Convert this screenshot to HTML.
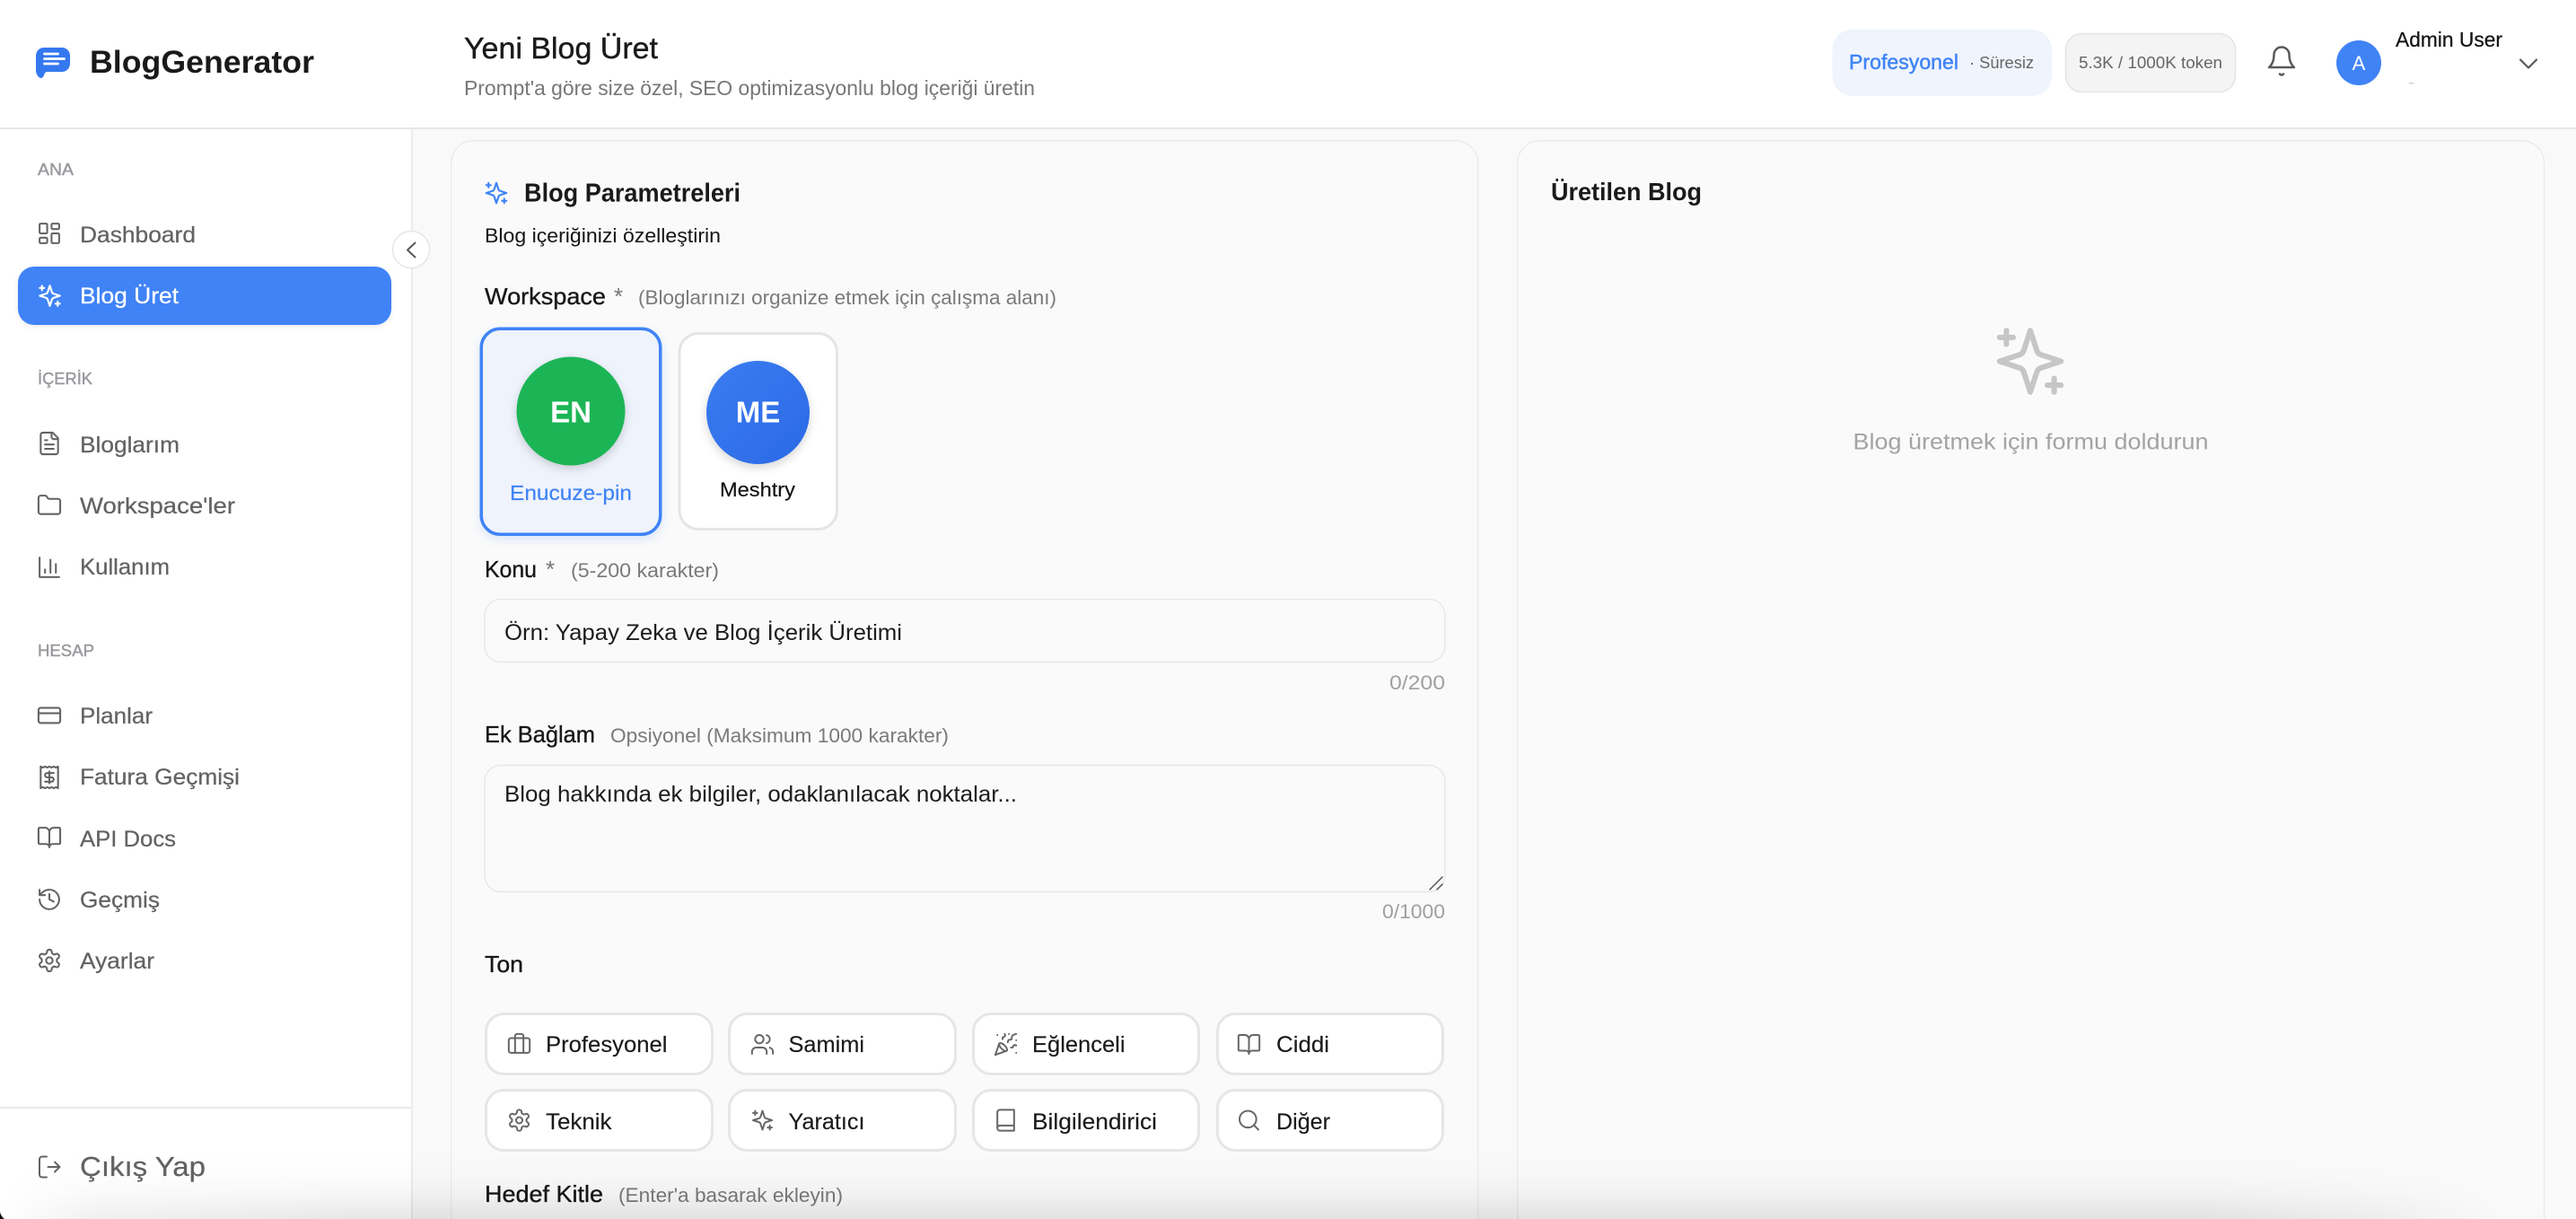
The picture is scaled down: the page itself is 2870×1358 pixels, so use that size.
<!DOCTYPE html>
<html lang="tr">
<head>
<meta charset="utf-8">
<title>BlogGenerator</title>
<style>
html,body{margin:0;padding:0;width:2870px;height:1358px;overflow:hidden;background:#f9f9f9}
svg{display:block}
text{font-family:"Liberation Sans",Arial,sans-serif;white-space:pre}
.nav{font-size:25px;fill:#636363;stroke:#636363;stroke-width:.25}
.sec{font-size:18px;fill:#98989d;stroke:#98989d;stroke-width:.4}
.lab{font-size:26px;fill:#171717;stroke:#171717;stroke-width:.35}
.hint{font-size:22px;fill:#7a7a7a}
.ph{font-size:25px;fill:#1c1c1c}
.cnt{font-size:22px;fill:#a0a0a0}
.btn{font-size:25px;fill:#1a1a1a;stroke:#1a1a1a;stroke-width:.15}
.ic{fill:none;stroke:#636363;stroke-width:1.7;stroke-linecap:round;stroke-linejoin:round}
.ict{fill:none;stroke:#666;stroke-width:1.7;stroke-linecap:round;stroke-linejoin:round}
</style>
</head>
<body>
<svg xmlns="http://www.w3.org/2000/svg" width="2870" height="1358" viewBox="0 0 2870 1358">
<defs>
<filter id="sh1" x="-30%" y="-30%" width="160%" height="160%"><feDropShadow dx="0" dy="4" stdDeviation="5" flood-color="#000" flood-opacity=".16"/></filter>
<filter id="sh2" x="-10%" y="-10%" width="120%" height="125%"><feDropShadow dx="0" dy="4" stdDeviation="5" flood-color="#3b82f6" flood-opacity=".18"/></filter>
<filter id="sh3" x="-10%" y="-20%" width="120%" height="140%"><feDropShadow dx="0" dy="2" stdDeviation="3" flood-color="#000" flood-opacity=".08"/></filter>
<linearGradient id="me" x1="0" y1="0" x2="1" y2="1"><stop offset="0" stop-color="#3b7cf0"/><stop offset="1" stop-color="#2b69e6"/></linearGradient>
<linearGradient id="fadeV" gradientUnits="userSpaceOnUse" x1="0" y1="1285" x2="0" y2="1358"><stop offset="0" stop-color="#000" stop-opacity="0"/><stop offset=".35" stop-color="#000" stop-opacity=".012"/><stop offset=".62" stop-color="#000" stop-opacity=".035"/><stop offset="1" stop-color="#000" stop-opacity=".095"/></linearGradient>
<linearGradient id="fadeH" gradientUnits="userSpaceOnUse" x1="0" y1="0" x2="2870" y2="0"><stop offset="0" stop-color="#000"/><stop offset=".035" stop-color="#999"/><stop offset=".14" stop-color="#fff"/><stop offset=".855" stop-color="#fff"/><stop offset=".925" stop-color="#808080"/><stop offset=".97" stop-color="#0d0d0d"/><stop offset="1" stop-color="#000"/></linearGradient>
<mask id="fadeM" maskUnits="userSpaceOnUse" x="0" y="1285" width="2870" height="73"><rect y="1285" width="2870" height="73" fill="url(#fadeH)"/></mask>

<symbol id="dash" viewBox="0 0 24 24"><rect x="3" y="3" width="7" height="9" rx="1"/><rect x="14" y="3" width="7" height="5" rx="1"/><rect x="14" y="12" width="7" height="9" rx="1"/><rect x="3" y="16" width="7" height="5" rx="1"/></symbol>
<symbol id="spark" viewBox="0 0 24 24"><path d="m12 3-1.912 5.813a2 2 0 0 1-1.275 1.275L3 12l5.813 1.912a2 2 0 0 1 1.275 1.275L12 21l1.912-5.813a2 2 0 0 1 1.275-1.275L21 12l-5.813-1.912a2 2 0 0 1-1.275-1.275L12 3Z"/><path d="M5 3v4"/><path d="M19 17v4"/><path d="M3 5h4"/><path d="M17 19h4"/></symbol>
<symbol id="file" viewBox="0 0 24 24"><path d="M15 2H6a2 2 0 0 0-2 2v16a2 2 0 0 0 2 2h12a2 2 0 0 0 2-2V7Z"/><path d="M14 2v4a2 2 0 0 0 2 2h4"/><path d="M10 9H8"/><path d="M16 13H8"/><path d="M16 17H8"/></symbol>
<symbol id="folder" viewBox="0 0 24 24"><path d="M20 20a2 2 0 0 0 2-2V8a2 2 0 0 0-2-2h-7.900a2 2 0 0 1-1.690-.9L9.600 3.900A2 2 0 0 0 7.930 3H4a2 2 0 0 0-2 2v13a2 2 0 0 0 2 2Z"/></symbol>
<symbol id="chart" viewBox="0 0 24 24"><path d="M3 3v18h18"/><path d="M18 17V9"/><path d="M13 17V5"/><path d="M8 17v-3"/></symbol>
<symbol id="card" viewBox="0 0 24 24"><rect x="2" y="5" width="20" height="14" rx="2"/><path d="M2 10h20"/></symbol>
<symbol id="receipt" viewBox="0 0 24 24"><path d="M4 2v20l2-1 2 1 2-1 2 1 2-1 2 1 2-1 2 1V2l-2 1-2-1-2 1-2-1-2 1-2-1-2 1Z"/><path d="M16 8h-6a2 2 0 1 0 0 4h4a2 2 0 1 1 0 4H8"/><path d="M12 17.500v-11"/></symbol>
<symbol id="bookopen" viewBox="0 0 24 24"><path d="M12 7v14"/><path d="M3 18a1 1 0 0 1-1-1V4a1 1 0 0 1 1-1h5a4 4 0 0 1 4 4 4 4 0 0 1 4-4h5a1 1 0 0 1 1 1v13a1 1 0 0 1-1 1h-6a3 3 0 0 0-3 3 3 3 0 0 0-3-3z"/></symbol>
<symbol id="history" viewBox="0 0 24 24"><path d="M3 12a9 9 0 1 0 9-9 9.750 9.750 0 0 0-6.740 2.740L3 8"/><path d="M3 3v5h5"/><path d="M12 7v5l4 2"/></symbol>
<symbol id="gear" viewBox="0 0 24 24"><path d="M12.220 2h-.44a2 2 0 0 0-2 2v.18a2 2 0 0 1-1 1.730l-.43.25a2 2 0 0 1-2 0l-.15-.08a2 2 0 0 0-2.730.73l-.22.38a2 2 0 0 0 .73 2.730l.15.1a2 2 0 0 1 1 1.720v.51a2 2 0 0 1-1 1.740l-.15.09a2 2 0 0 0-.73 2.730l.22.38a2 2 0 0 0 2.730.73l.15-.08a2 2 0 0 1 2 0l.43.25a2 2 0 0 1 1 1.730V20a2 2 0 0 0 2 2h.44a2 2 0 0 0 2-2v-.18a2 2 0 0 1 1-1.730l.43-.25a2 2 0 0 1 2 0l.15.08a2 2 0 0 0 2.730-.73l.22-.39a2 2 0 0 0-.73-2.730l-.15-.08a2 2 0 0 1-1-1.740v-.5a2 2 0 0 1 1-1.740l.15-.09a2 2 0 0 0 .73-2.730l-.22-.38a2 2 0 0 0-2.730-.73l-.15.08a2 2 0 0 1-2 0l-.43-.25a2 2 0 0 1-1-1.730V4a2 2 0 0 0-2-2z"/><circle cx="12" cy="12" r="3"/></symbol>
<symbol id="briefcase" viewBox="0 0 24 24"><path d="M16 20V4a2 2 0 0 0-2-2h-4a2 2 0 0 0-2 2v16"/><rect x="2" y="6" width="20" height="14" rx="2"/></symbol>
<symbol id="users" viewBox="0 0 24 24"><path d="M16 21v-2a4 4 0 0 0-4-4H6a4 4 0 0 0-4 4v2"/><circle cx="9" cy="7" r="4"/><path d="M22 21v-2a4 4 0 0 0-3-3.870"/><path d="M16 3.130a4 4 0 0 1 0 7.750"/></symbol>
<symbol id="party" viewBox="0 0 24 24"><path d="M5.800 11.300 2 22l10.700-3.790"/><path d="M4 3h.01"/><path d="M22 8h.01"/><path d="M15 2h.01"/><path d="M22 20h.01"/><path d="m22 2-2.240.75a2.900 2.900 0 0 0-1.960 3.120c.1.860-.57 1.630-1.450 1.630h-.38c-.86 0-1.600.6-1.760 1.440L14 10"/><path d="m22 13-.82-.33c-.86-.34-1.820.2-1.980 1.110-.11.7-.72 1.220-1.430 1.220H17"/><path d="m11 2 .33.82c.34.860-.2 1.820-1.110 1.980C9.520 4.900 9 5.520 9 6.230V7"/><path d="M11 13c1.930 1.930 2.830 4.170 2 5-.83.83-3.070-.07-5-2-1.930-1.930-2.830-4.170-2-5 .83-.83 3.070.07 5 2Z"/></symbol>
<symbol id="book" viewBox="0 0 24 24"><path d="M4 19.500v-15A2.500 2.500 0 0 1 6.500 2H20v20H6.500a2.500 2.500 0 0 1 0-5H20"/></symbol>
<symbol id="search" viewBox="0 0 24 24"><circle cx="11" cy="11" r="8"/><path d="m21 21-4.300-4.300"/></symbol>
</defs>

<!-- page -->
<rect width="2870" height="1358" fill="#f9f9f9"/>

<!-- header -->
<rect width="2870" height="142" fill="#fff"/>
<rect y="142" width="2870" height="2" fill="#e7e7e9"/>

<!-- logo -->
<path d="M49 53h20a9 9 0 0 1 9 9v9a9 9 0 0 1-9 9H52.500c-1.500 0-2.500 1-3 2.500-.8 2.500-2 4.500-4 4.500-3.500-1-5.500-5-5.500-9V62a9 9 0 0 1 9-9z" fill="#3478f0"/>
<path d="M49.500 60h15M49.500 65.500h22M49.500 71h15" stroke="#fff" stroke-width="2.800" stroke-linecap="round" fill="none"/>
<text x="100" y="81" font-size="35" font-weight="700" fill="#1a1a1a" textLength="250" lengthAdjust="spacingAndGlyphs">BlogGenerator</text>

<!-- title -->
<text x="517" y="65" font-size="33" fill="#1a1a1a" stroke="#1a1a1a" stroke-width=".4" textLength="216" lengthAdjust="spacingAndGlyphs">Yeni Blog Üret</text>
<text x="517" y="106" font-size="23" fill="#777" textLength="636" lengthAdjust="spacingAndGlyphs">Prompt'a göre size özel, SEO optimizasyonlu blog içeriği üretin</text>

<!-- header right -->
<rect x="2041.500" y="33" width="244.500" height="74" rx="22" fill="#eff4fd"/>
<text x="2060" y="77" font-size="23" fill="#3f83f6" stroke="#3f83f6" stroke-width=".45" textLength="122" lengthAdjust="spacingAndGlyphs">Profesyonel</text>
<text x="2194" y="76" font-size="18" fill="#666" textLength="72" lengthAdjust="spacingAndGlyphs">· Süresiz</text>
<rect x="2301.500" y="37.500" width="189" height="65" rx="18" fill="#f4f4f4" stroke="#e4e4e4" stroke-width="1.500"/>
<text x="2316" y="76" font-size="18.500" fill="#666" textLength="160" lengthAdjust="spacingAndGlyphs">5.3K / 1000K token</text>
<g fill="none" stroke="#595959" stroke-width="2.500" stroke-linecap="round" stroke-linejoin="round">
<path d="M2533.500 61a8.500 8.500 0 0 1 17 0c0 10 5.500 14 5.500 14h-28s5.500-4 5.500-14"/>
<path d="M2540 82.500a2.500 2.500 0 0 0 4 0"/>
</g>
<circle cx="2628" cy="70" r="25" fill="#3f83f6"/>
<text x="2628" y="78" font-size="22" fill="#fff" text-anchor="middle">A</text>
<text x="2669" y="52" font-size="23" fill="#141414" stroke="#141414" stroke-width=".25" textLength="119" lengthAdjust="spacingAndGlyphs">Admin User</text>
<rect x="2684" y="92" width="5" height="1.500" fill="#ccc"/>
<path d="M2808 66.500l9 9 9-9" fill="none" stroke="#595959" stroke-width="2.200" stroke-linecap="round" stroke-linejoin="round"/>

<!-- sidebar -->
<rect y="144" width="458" height="1214" fill="#fff"/>
<rect x="458" y="144" width="2" height="1214" fill="#ebebed"/>
<text class="sec" x="42" y="195" textLength="40" lengthAdjust="spacingAndGlyphs">ANA</text>
<use href="#dash" class="ic" x="40.500" y="245.500" width="29" height="29"/>
<text class="nav" x="89" y="270" textLength="129" lengthAdjust="spacingAndGlyphs">Dashboard</text>
<rect x="20" y="297" width="416" height="65" rx="18" fill="#3f83f6" filter="url(#sh3)"/>
<use href="#spark" fill="none" stroke="#fff" stroke-width="1.700" stroke-linecap="round" stroke-linejoin="round" x="40.500" y="314.500" width="30" height="30"/>
<text x="89" y="338" font-size="25" fill="#fff" stroke="#fff" stroke-width=".25" textLength="110" lengthAdjust="spacingAndGlyphs">Blog Üret</text>
<circle cx="458" cy="278" r="20.500" fill="#fff" stroke="#e6e6e6" stroke-width="1.500"/>
<path d="M462.500 270.500l-8.500 8 8.500 8" fill="none" stroke="#595959" stroke-width="2" stroke-linecap="round" stroke-linejoin="round"/>

<text class="sec" x="42" y="428" textLength="61" lengthAdjust="spacingAndGlyphs">İÇERİK</text>
<use href="#file" class="ic" x="40.500" y="479.500" width="29" height="29"/>
<text class="nav" x="89" y="504" textLength="111" lengthAdjust="spacingAndGlyphs">Bloglarım</text>
<use href="#folder" class="ic" x="40.500" y="548.500" width="29" height="29"/>
<text class="nav" x="89" y="572" textLength="173" lengthAdjust="spacingAndGlyphs">Workspace'ler</text>
<use href="#chart" class="ic" x="40.500" y="617.500" width="29" height="29"/>
<text class="nav" x="89" y="640" textLength="100" lengthAdjust="spacingAndGlyphs">Kullanım</text>

<text class="sec" x="42" y="731" textLength="63" lengthAdjust="spacingAndGlyphs">HESAP</text>
<use href="#card" class="ic" x="40.500" y="782.500" width="29" height="29"/>
<text class="nav" x="89" y="806" textLength="81" lengthAdjust="spacingAndGlyphs">Planlar</text>
<use href="#receipt" class="ic" x="40.500" y="851.500" width="29" height="29"/>
<text class="nav" x="89" y="874" textLength="178" lengthAdjust="spacingAndGlyphs">Fatura Geçmişi</text>
<use href="#bookopen" class="ic" x="40.500" y="918.500" width="29" height="29"/>
<text class="nav" x="89" y="943" textLength="107" lengthAdjust="spacingAndGlyphs">API Docs</text>
<use href="#history" class="ic" x="40.500" y="987.500" width="29" height="29"/>
<text class="nav" x="89" y="1011" textLength="89" lengthAdjust="spacingAndGlyphs">Geçmiş</text>
<use href="#gear" class="ic" x="40.500" y="1055.500" width="29" height="29"/>
<text class="nav" x="89" y="1079" textLength="83" lengthAdjust="spacingAndGlyphs">Ayarlar</text>

<rect y="1233" width="458" height="2" fill="#e9e9ec"/>
<g fill="none" stroke="#636363" stroke-width="2" stroke-linecap="round" stroke-linejoin="round">
<path d="M52 1288.500h-5a3 3 0 0 0-3 3v17a3 3 0 0 0 3 3h5"/>
<path d="M53.500 1300h13M61 1294.500l5.500 5.500-5.500 5.500"/>
</g>
<text x="89" y="1310" font-size="31" fill="#636363" stroke="#636363" stroke-width=".25" textLength="140" lengthAdjust="spacingAndGlyphs">Çıkış Yap</text>

<!-- left card -->
<path d="M502.750 1358V181.750a25 25 0 0 1 25-25H1621.500a25 25 0 0 1 25 25V1358" fill="#fafafa" stroke="#ececec" stroke-width="1.500"/>
<use href="#spark" fill="none" stroke="#3f83f6" stroke-width="1.700" stroke-linecap="round" stroke-linejoin="round" x="538" y="200" width="30" height="30"/>
<text x="584" y="224.500" font-size="29" font-weight="700" fill="#1a1a1a" textLength="241" lengthAdjust="spacingAndGlyphs">Blog Parametreleri</text>
<text x="540" y="270" font-size="22.500" fill="#141414" textLength="263" lengthAdjust="spacingAndGlyphs">Blog içeriğinizi özelleştirin</text>

<text class="lab" x="540" y="339" textLength="135" lengthAdjust="spacingAndGlyphs">Workspace</text>
<text x="684" y="339" font-size="26" fill="#777">*</text>
<text class="hint" x="711" y="339" textLength="466" lengthAdjust="spacingAndGlyphs">(Bloglarınızı organize etmek için çalışma alanı)</text>

<!-- workspace cards -->
<rect x="536.250" y="366.250" width="199.500" height="229" rx="21" fill="#eff3fc" stroke="#3f83f6" stroke-width="3.500" filter="url(#sh2)"/>
<circle cx="636" cy="458" r="60.500" fill="#1fb557" filter="url(#sh1)"/>
<text x="636" y="470.500" font-size="33" font-weight="700" fill="#fff" text-anchor="middle">EN</text>
<text x="568" y="557" font-size="23" fill="#3f83f6" stroke="#3f83f6" stroke-width=".2" textLength="136" lengthAdjust="spacingAndGlyphs">Enucuze-pin</text>

<rect x="757" y="371.500" width="175.500" height="218" rx="21" fill="#fff" stroke="#e5e5e5" stroke-width="3"/>
<circle cx="844.500" cy="459.500" r="57.500" fill="url(#me)" filter="url(#sh1)"/>
<text x="844.500" y="470.500" font-size="33" font-weight="700" fill="#fff" text-anchor="middle">ME</text>
<text x="802" y="553" font-size="22" fill="#141414" stroke="#141414" stroke-width=".2" textLength="84" lengthAdjust="spacingAndGlyphs">Meshtry</text>

<!-- konu -->
<text class="lab" x="540" y="643" textLength="58" lengthAdjust="spacingAndGlyphs">Konu</text>
<text x="608" y="643" font-size="26" fill="#777">*</text>
<text class="hint" x="636" y="643" textLength="165" lengthAdjust="spacingAndGlyphs">(5-200 karakter)</text>
<rect x="540" y="667.500" width="1070" height="70" rx="18" fill="#fafafa" stroke="#e8e8e8" stroke-width="1.500"/>
<text class="ph" x="562" y="713" textLength="443" lengthAdjust="spacingAndGlyphs">Örn: Yapay Zeka ve Blog İçerik Üretimi</text>
<text class="cnt" x="1548" y="768" textLength="62" lengthAdjust="spacingAndGlyphs">0/200</text>

<!-- ek baglam -->
<text class="lab" x="540" y="827" textLength="123" lengthAdjust="spacingAndGlyphs">Ek Bağlam</text>
<text class="hint" x="680" y="827" textLength="377" lengthAdjust="spacingAndGlyphs">Opsiyonel (Maksimum 1000 karakter)</text>
<rect x="540" y="852.500" width="1070" height="141" rx="18" fill="#fafafa" stroke="#e8e8e8" stroke-width="1.500"/>
<text class="ph" x="562" y="893" textLength="571" lengthAdjust="spacingAndGlyphs">Blog hakkında ek bilgiler, odaklanılacak noktalar...</text>
<path d="M1593 991l14-14M1601 991l6-6" stroke="#555" stroke-width="1.500" fill="none" stroke-linecap="round"/>
<text class="cnt" x="1540" y="1023" textLength="70" lengthAdjust="spacingAndGlyphs">0/1000</text>

<!-- ton -->
<text class="lab" x="540" y="1083" textLength="43" lengthAdjust="spacingAndGlyphs">Ton</text>

<g fill="#fff" stroke="#e6e6e6" stroke-width="3">
<rect x="541.500" y="1129.500" width="252" height="67" rx="20"/>
<rect x="812.500" y="1129.500" width="252" height="67" rx="20"/>
<rect x="1084.500" y="1129.500" width="251" height="67" rx="20"/>
<rect x="1356.500" y="1129.500" width="251" height="67" rx="20"/>
<rect x="541.500" y="1214.500" width="252" height="67" rx="20"/>
<rect x="812.500" y="1214.500" width="252" height="67" rx="20"/>
<rect x="1084.500" y="1214.500" width="251" height="67" rx="20"/>
<rect x="1356.500" y="1214.500" width="251" height="67" rx="20"/>
</g>
<use href="#briefcase" class="ict" x="564.500" y="1149.500" width="28" height="28"/>
<text class="btn" x="608" y="1172" textLength="135.500" lengthAdjust="spacingAndGlyphs">Profesyonel</text>
<use href="#users" class="ict" x="835.500" y="1149.500" width="28" height="28"/>
<text class="btn" x="878.500" y="1172" textLength="84.500" lengthAdjust="spacingAndGlyphs">Samimi</text>
<use href="#party" class="ict" x="1106.500" y="1149.500" width="28" height="28"/>
<text class="btn" x="1150" y="1172" textLength="103.500" lengthAdjust="spacingAndGlyphs">Eğlenceli</text>
<use href="#bookopen" class="ict" x="1377.500" y="1149.500" width="28" height="28"/>
<text class="btn" x="1422" y="1172" textLength="59" lengthAdjust="spacingAndGlyphs">Ciddi</text>

<use href="#gear" class="ict" x="564.500" y="1234" width="28" height="28"/>
<text class="btn" x="608" y="1258" textLength="73.500" lengthAdjust="spacingAndGlyphs">Teknik</text>
<use href="#spark" class="ict" x="835.500" y="1234" width="28" height="28"/>
<text class="btn" x="878.500" y="1258" textLength="85" lengthAdjust="spacingAndGlyphs">Yaratıcı</text>
<use href="#book" class="ict" x="1106.500" y="1234" width="28" height="28"/>
<text class="btn" x="1150" y="1258" textLength="139" lengthAdjust="spacingAndGlyphs">Bilgilendirici</text>
<use href="#search" class="ict" x="1377.500" y="1234" width="28" height="28"/>
<text class="btn" x="1422" y="1258" textLength="60" lengthAdjust="spacingAndGlyphs">Diğer</text>

<text class="lab" x="540" y="1339" textLength="132" lengthAdjust="spacingAndGlyphs">Hedef Kitle</text>
<text class="hint" x="689" y="1339" textLength="250" lengthAdjust="spacingAndGlyphs">(Enter'a basarak ekleyin)</text>

<!-- right card -->
<path d="M1690.750 1358V181.750a25 25 0 0 1 25-25H2809.500a25 25 0 0 1 25 25V1358" fill="#fafafa" stroke="#ececec" stroke-width="1.500"/>
<text x="1728" y="223" font-size="28" font-weight="700" fill="#1a1a1a" textLength="168" lengthAdjust="spacingAndGlyphs">Üretilen Blog</text>
<g transform="translate(2216.400 356.900) scale(3.800)" fill="none" stroke="#c6c6c6" stroke-width="1.600" stroke-linecap="round" stroke-linejoin="round">
<path d="m12 3-1.912 5.813a2 2 0 0 1-1.275 1.275L3 12l5.813 1.912a2 2 0 0 1 1.275 1.275L12 21l1.912-5.813a2 2 0 0 1 1.275-1.275L21 12l-5.813-1.912a2 2 0 0 1-1.275-1.275L12 3Z"/>
<path d="M5 3v4"/><path d="M19 17v4"/><path d="M3 5h4"/><path d="M17 19h4"/>
</g>
<text x="2064.500" y="500.500" font-size="25" fill="#a3a3a3" textLength="396" lengthAdjust="spacingAndGlyphs">Blog üretmek için formu doldurun</text>

<!-- bottom vignette + window corner -->
<rect y="1285" width="2870" height="73" fill="url(#fadeV)" mask="url(#fadeM)"/>
<path d="M0 1350q1 5 5 8H0z" fill="#111"/>
</svg>
</body>
</html>
